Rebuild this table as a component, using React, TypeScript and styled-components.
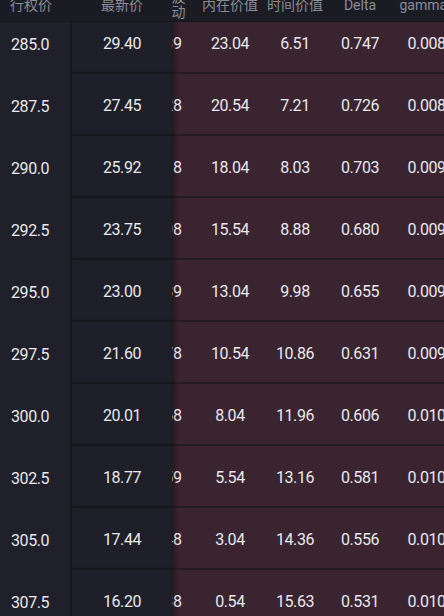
import React from "react";
import styled, { createGlobalStyle } from "styled-components";

const Global = createGlobalStyle`
  html, body { margin: 0; padding: 0; background: #1e1f28; }
  body { width: 444px; height: 616px; overflow: hidden; }
  * { box-sizing: border-box; }
`;

const Page = styled.div`
  width: 444px;
  height: 616px;
  overflow: hidden;
  background: #1e1f28;
  font-family: Roboto, "Noto Sans CJK SC", sans-serif;
  display: flex;
  flex-direction: column;
`;

const Header = styled.div`
  height: 22px;
  flex: none;
  overflow: hidden;
  background: #1b1c23;
  border-bottom: 1px solid #16171d;
  position: relative;
  z-index: 2;
`;

const HeaderInner = styled.div`
  display: flex;
  height: 30px;
  margin-top: -10px;
`;

const HeadCell = styled.div<{ $w: number; $align?: "start" | "center" | "end"; $pl?: number; $pr?: number }>`
  width: ${(p) => p.$w}px;
  flex: none;
  display: flex;
  flex-direction: column;
  justify-content: center;
  align-items: ${(p) => (p.$align === "start" ? "flex-start" : p.$align === "end" ? "flex-end" : "center")};
  padding-left: ${(p) => p.$pl ?? 0}px;
  padding-right: ${(p) => p.$pr ?? 0}px;
  font-size: 14px;
  line-height: 15px;
  color: #8a8c98;
  white-space: nowrap;
`;

const HeadScroll = styled.div`
  flex: 1;
  overflow: hidden;
  display: flex;
`;

const ScrollInner = styled.div`
  display: flex;
  flex: none;
  margin-left: -39.5px;
`;

const Body = styled.div`
  flex: 1;
  overflow: hidden;
`;

const BodyInner = styled.div`
  margin-top: -10px;
  display: flex;
  flex-direction: column;
`;

const Row = styled.div`
  display: flex;
  height: 62px;
  flex: none;
`;

const StrikeCell = styled.div`
  width: 70px;
  flex: none;
  display: flex;
  align-items: center;
  padding-left: 11px;
  padding-top: 2px;
  background: #1f2029;
`;

const Divider = styled.div`
  width: 2px;
  flex: none;
  background: #18191f;
`;

const LastCell = styled.div`
  width: 100px;
  flex: none;
  display: flex;
  align-items: center;
  justify-content: center;
  padding-top: 2px;
  background: #1e1f28;
  border-bottom: 2px solid #18191f;
  box-shadow: 2px 0 4px rgba(0, 0, 0, 0.25);
  position: relative;
  z-index: 1;
`;

const ScrollCells = styled.div`
  flex: 1;
  overflow: hidden;
  display: flex;
  background: linear-gradient(to right, #2c1f27 0px, #3a2430 8px, #3a2430 100%);
  border-bottom: 2px solid #251a21;
`;

const Cell = styled.div<{ $w: number; $align?: "start" | "center" | "end"; $pl?: number; $pr?: number }>`
  width: ${(p) => p.$w}px;
  flex: none;
  display: flex;
  align-items: center;
  justify-content: ${(p) => (p.$align === "start" ? "flex-start" : p.$align === "end" ? "flex-end" : "center")};
  padding-left: ${(p) => p.$pl ?? 0}px;
  padding-right: ${(p) => p.$pr ?? 0}px;
  padding-top: 2px;
  white-space: nowrap;
`;

const Num = styled.span`
  font-family: Roboto, sans-serif;
  font-size: 16px;
  letter-spacing: -0.4px;
  color: #e8e8ee;
`;

const rows: string[][] = [
  ["285.0", "29.40", "25.39", "23.04", "6.51", "0.747", "0.0083"],
  ["287.5", "27.45", "25.28", "20.54", "7.21", "0.726", "0.0086"],
  ["290.0", "25.92", "25.18", "18.04", "8.03", "0.703", "0.0090"],
  ["292.5", "23.75", "24.98", "15.54", "8.88", "0.680", "0.0093"],
  ["295.0", "23.00", "24.89", "13.04", "9.98", "0.655", "0.0096"],
  ["297.5", "21.60", "24.78", "10.54", "10.86", "0.631", "0.0098"],
  ["300.0", "20.01", "24.68", "8.04", "11.96", "0.606", "0.0101"],
  ["302.5", "18.77", "24.59", "5.54", "13.16", "0.581", "0.0103"],
  ["305.0", "17.44", "24.48", "3.04", "14.36", "0.556", "0.0105"],
  ["307.5", "16.20", "24.38", "0.54", "15.63", "0.531", "0.0106"],
];

export default function App() {
  return (
    <Page>
      <Global />
      <Header>
        <HeaderInner>
          <HeadCell $w={72} $align="start" $pl={10}>行权价</HeadCell>
          <HeadCell $w={100}>最新价</HeadCell>
          <HeadScroll>
            <ScrollInner>
              <HeadCell $w={65} $align="end" $pr={12}>
                <span>波</span>
                <span>动</span>
              </HeadCell>
              <HeadCell $w={65}>内在价值</HeadCell>
              <HeadCell $w={65}>时间价值</HeadCell>
              <HeadCell $w={65}>Delta</HeadCell>
              <HeadCell $w={75} $align="start" $pl={7}>gamma</HeadCell>
            </ScrollInner>
          </HeadScroll>
        </HeaderInner>
      </Header>
      <Body>
        <BodyInner>
          {rows.map((r) => (
            <Row key={r[0]}>
              <StrikeCell>
                <Num>{r[0]}</Num>
              </StrikeCell>
              <Divider />
              <LastCell>
                <Num>{r[1]}</Num>
              </LastCell>
              <ScrollCells>
                <ScrollInner>
                  <Cell $w={65} $align="end" $pr={16}>
                    <Num>{r[2]}</Num>
                  </Cell>
                  <Cell $w={65}>
                    <Num>{r[3]}</Num>
                  </Cell>
                  <Cell $w={65}>
                    <Num>{r[4]}</Num>
                  </Cell>
                  <Cell $w={65}>
                    <Num>{r[5]}</Num>
                  </Cell>
                  <Cell $w={75} $align="start" $pl={15}>
                    <Num>{r[6]}</Num>
                  </Cell>
                </ScrollInner>
              </ScrollCells>
            </Row>
          ))}
        </BodyInner>
      </Body>
    </Page>
  );
}
